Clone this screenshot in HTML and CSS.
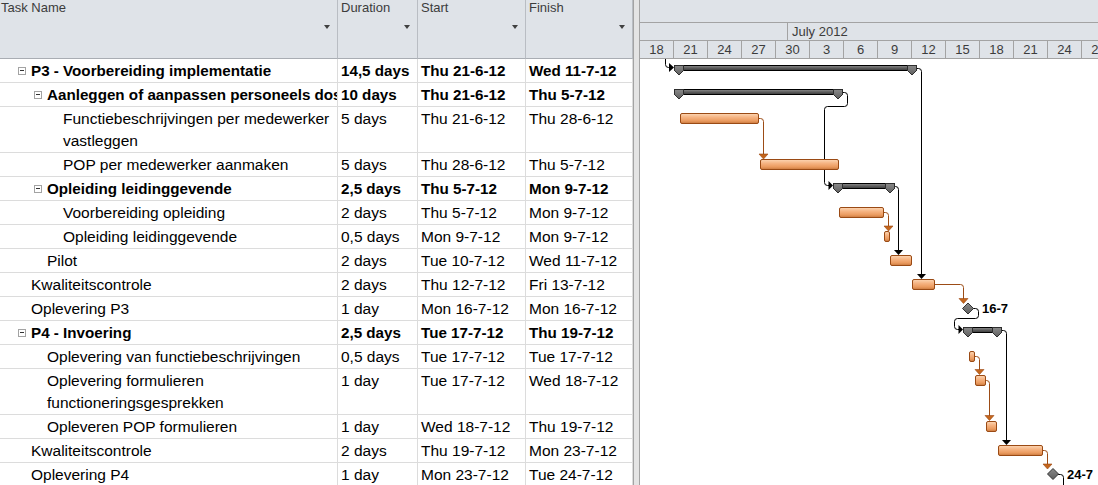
FILE: index.html
```html
<!DOCTYPE html>
<html>
<head>
<meta charset="utf-8">
<link rel="stylesheet" href="styles.css">
</head>
<body>
<div class="app">
  <div class="table">
    <div class="hrow">
      <div class="th name"><span>Task Name</span><i class="dd"></i></div>
      <div class="th"><span>Duration</span><i class="dd"></i></div>
      <div class="th"><span>Start</span><i class="dd"></i></div>
      <div class="th"><span>Finish</span><i class="dd"></i></div>
    </div>
    <div class="row b"><div class="td name l1"><i class="tg"></i>P3 - Voorbereiding implementatie</div><div class="td">14,5 days</div><div class="td">Thu 21-6-12</div><div class="td">Wed 11-7-12</div></div>
    <div class="row b"><div class="td name l2"><i class="tg"></i>Aanleggen of aanpassen personeels dossier</div><div class="td">10 days</div><div class="td">Thu 21-6-12</div><div class="td">Thu 5-7-12</div></div>
    <div class="row"><div class="td name l3">Functiebeschrijvingen per medewerker<br>vastleggen</div><div class="td">5 days</div><div class="td">Thu 21-6-12</div><div class="td">Thu 28-6-12</div></div>
    <div class="row"><div class="td name l3">POP per medewerker aanmaken</div><div class="td">5 days</div><div class="td">Thu 28-6-12</div><div class="td">Thu 5-7-12</div></div>
    <div class="row b"><div class="td name l2"><i class="tg"></i>Opleiding leidinggevende</div><div class="td">2,5 days</div><div class="td">Thu 5-7-12</div><div class="td">Mon 9-7-12</div></div>
    <div class="row"><div class="td name l3">Voorbereiding opleiding</div><div class="td">2 days</div><div class="td">Thu 5-7-12</div><div class="td">Mon 9-7-12</div></div>
    <div class="row"><div class="td name l3">Opleiding leidinggevende</div><div class="td">0,5 days</div><div class="td">Mon 9-7-12</div><div class="td">Mon 9-7-12</div></div>
    <div class="row"><div class="td name l2">Pilot</div><div class="td">2 days</div><div class="td">Tue 10-7-12</div><div class="td">Wed 11-7-12</div></div>
    <div class="row"><div class="td name l1">Kwaliteitscontrole</div><div class="td">2 days</div><div class="td">Thu 12-7-12</div><div class="td">Fri 13-7-12</div></div>
    <div class="row"><div class="td name l1">Oplevering P3</div><div class="td">1 day</div><div class="td">Mon 16-7-12</div><div class="td">Mon 16-7-12</div></div>
    <div class="row b"><div class="td name l1"><i class="tg"></i>P4 - Invoering</div><div class="td">2,5 days</div><div class="td">Tue 17-7-12</div><div class="td">Thu 19-7-12</div></div>
    <div class="row"><div class="td name l2">Oplevering van functiebeschrijvingen</div><div class="td">0,5 days</div><div class="td">Tue 17-7-12</div><div class="td">Tue 17-7-12</div></div>
    <div class="row"><div class="td name l2">Oplevering formulieren<br>functioneringsgesprekken</div><div class="td">1 day</div><div class="td">Tue 17-7-12</div><div class="td">Wed 18-7-12</div></div>
    <div class="row"><div class="td name l2">Opleveren POP formulieren</div><div class="td">1 day</div><div class="td">Wed 18-7-12</div><div class="td">Thu 19-7-12</div></div>
    <div class="row"><div class="td name l1">Kwaliteitscontrole</div><div class="td">2 days</div><div class="td">Thu 19-7-12</div><div class="td">Mon 23-7-12</div></div>
    <div class="row"><div class="td name l1">Oplevering P4</div><div class="td">1 day</div><div class="td">Mon 23-7-12</div><div class="td">Tue 24-7-12</div></div>
  </div>
  <div class="split"></div>
  <div class="gantt">
    <div class="t1"></div>
    <div class="t2"><div class="m jun"></div><div class="m jul">July 2012</div></div>
    <div class="t3">
      <div class="d">18</div><div class="d">21</div><div class="d">24</div><div class="d">27</div><div class="d">30</div><div class="d">3</div><div class="d">6</div><div class="d">9</div><div class="d">12</div><div class="d">15</div><div class="d">18</div><div class="d">21</div><div class="d">24</div><div class="d">27</div>
    </div>
    <svg class="chart" width="458" height="426" viewBox="640 59 458 426" xmlns="http://www.w3.org/2000/svg">
      <defs>
        <linearGradient id="tb" x1="0" y1="0" x2="0" y2="1">
          <stop offset="0" stop-color="#fcd6b4"/>
          <stop offset="0.4" stop-color="#f5b280"/>
          <stop offset="0.75" stop-color="#ea9a5e"/>
          <stop offset="1" stop-color="#c7783e"/>
        </linearGradient>
        <linearGradient id="sb" x1="0" y1="0" x2="0" y2="1">
          <stop offset="0" stop-color="#8e8e8e"/>
          <stop offset="0.5" stop-color="#5e5e5e"/>
          <stop offset="1" stop-color="#3a3a3a"/>
        </linearGradient>
        <linearGradient id="tr" x1="0" y1="0" x2="0" y2="1">
          <stop offset="0" stop-color="#8a8a8a"/>
          <stop offset="1" stop-color="#5e5e5e"/>
        </linearGradient>
      </defs>

      <g fill="none" stroke="#000" stroke-width="1">
        <path d="M665.5,59 V64.5 Q665.5,67.5 668.5,67.5 H670"/>
        <path d="M917,68.5 H918.5 Q921.5,68.5 921.5,71.5 V275"/>
        <path d="M843,92.5 H844.5 Q847.5,92.5 847.5,95.5 V103.5 Q847.5,106.5 844.5,106.5 H827.5 Q824.5,106.5 824.5,109.5 V182.5 Q824.5,185.5 827.5,185.5 H829"/>
        <path d="M895,186.5 H895.5 Q898.5,186.5 898.5,189.5 V251"/>
        <path d="M973,308.5 H975.5 Q978.5,308.5 978.5,311.5 V315.5 Q978.5,318.5 975.5,318.5 H957.5 Q954.5,318.5 954.5,321.5 V326.5 Q954.5,329.5 957.5,329.5 H959"/>
        <path d="M1002,330.5 H1003.5 Q1006.5,330.5 1006.5,333.5 V441"/>
        <path d="M1058,474.5 H1060.5 Q1063.5,474.5 1063.5,477.5 V486"/>
      </g>
      <g fill="#000">
        <polygon points="669,63 674,67.5 669,72"/>
        <polygon points="917,274 926,274 921.5,279"/>
        <polygon points="828.5,181 833,185.5 828.5,190"/>
        <polygon points="894,250 903,250 898.5,255"/>
        <polygon points="958.5,325 963,329.5 958.5,334"/>
        <polygon points="1002,440 1011,440 1006.5,445"/>
      </g>

      <g fill="none" stroke="#9c4c16" stroke-width="1">
        <path d="M759,118.5 H760.5 Q763.5,118.5 763.5,121.5 V155"/>
        <path d="M884,212.5 H885.5 Q888.5,212.5 888.5,215.5 V227"/>
        <path d="M935,284.5 H960.5 Q963.5,284.5 963.5,287.5 V299"/>
        <path d="M975,356.5 H976.5 Q979.5,356.5 979.5,359.5 V370"/>
        <path d="M986,380.5 H986.5 Q989.5,380.5 989.5,383.5 V416"/>
        <path d="M1043,450.5 H1044.5 Q1047.5,450.5 1047.5,453.5 V465"/>
      </g>
      <g fill="#c4661c" stroke="#9a4712" stroke-width="0.6">
        <polygon points="759,154 768,154 763.5,159"/>
        <polygon points="884,226 893,226 888.5,231"/>
        <polygon points="959,298.5 968,298.5 963.5,303.5"/>
        <polygon points="975,369.5 984,369.5 979.5,374.5"/>
        <polygon points="985,415.5 994,415.5 989.5,420.5"/>
        <polygon points="1043,464 1052,464 1047.5,469"/>
      </g>

      <g fill="url(#tb)" stroke="#9a4a14" stroke-width="1">
        <rect x="680.5" y="113.5" width="78" height="10" rx="1.5"/>
        <rect x="760.5" y="159.5" width="78" height="10" rx="1.5"/>
        <rect x="839.5" y="207.5" width="44" height="10" rx="1.5"/>
        <rect x="884.5" y="231.5" width="5" height="10" rx="1.5"/>
        <rect x="890.5" y="255.5" width="21" height="10" rx="1.5"/>
        <rect x="912.5" y="279.5" width="22" height="10" rx="1.5"/>
        <rect x="969.5" y="351.5" width="5" height="10" rx="1.5"/>
        <rect x="975.5" y="375.5" width="10" height="10" rx="1.5"/>
        <rect x="986.5" y="421.5" width="10" height="10" rx="1.5"/>
        <rect x="998.5" y="445.5" width="44" height="10" rx="1.5"/>
      </g>

      <g stroke="#000" stroke-width="1">
        <rect x="674.5" y="65.5" width="242" height="5" fill="url(#sb)"/>
        <rect x="674.5" y="89.5" width="168" height="5" fill="url(#sb)"/>
        <rect x="833.5" y="183.5" width="61" height="5" fill="url(#sb)"/>
        <rect x="963.5" y="327.5" width="38" height="5" fill="url(#sb)"/>
      </g>
      <g fill="url(#tr)" stroke="#2e2e2e" stroke-width="1" stroke-linejoin="miter">
        <polygon points="674.5,65.5 683.5,65.5 683.5,70.5 679,75 674.5,70.5"/>
        <polygon points="907.5,65.5 916.5,65.5 916.5,70.5 912,75 907.5,70.5"/>
        <polygon points="674.5,89.5 683.5,89.5 683.5,94.5 679,99 674.5,94.5"/>
        <polygon points="833.5,89.5 842.5,89.5 842.5,94.5 838,99 833.5,94.5"/>
        <polygon points="833.5,183.5 842.5,183.5 842.5,188.5 838,193 833.5,188.5"/>
        <polygon points="885.5,183.5 894.5,183.5 894.5,188.5 890,193 885.5,188.5"/>
        <polygon points="963.5,327.5 972.5,327.5 972.5,332.5 968,337 963.5,332.5"/>
        <polygon points="992.5,327.5 1001.5,327.5 1001.5,332.5 997,337 992.5,332.5"/>
      </g>

      <g fill="url(#tr)" stroke="#333" stroke-width="1">
        <polygon points="968,303 973.5,308.5 968,314 962.5,308.5"/>
        <polygon points="1053,468.5 1058.5,474 1053,479.5 1047.5,474"/>
      </g>
      <text class="ml" x="982" y="313">16-7</text>
      <text class="ml" x="1067" y="479">24-7</text>
    </svg>
  </div>
</div>
</body>
</html>
```

FILE: styles.css
```css
* { box-sizing: border-box; }

html, body {
  margin: 0;
  padding: 0;
}

body {
  width: 1098px;
  height: 485px;
  overflow: hidden;
  background: #fff;
  font-family: "Liberation Sans", Arial, sans-serif;
  color: #000;
}

.app {
  display: flex;
  height: 485px;
  overflow: hidden;
}

.table {
  width: 633px;
  flex: none;
}

.hrow,
.row {
  display: grid;
  grid-template-columns: 338px 80px 108px 107px;
}

.th {
  height: 59px;
  background: #dfe3e8;
  border-right: 1px solid #b9bdc3;
  border-bottom: 1px solid #a9adb3;
  display: flex;
  flex-direction: column;
  padding-left: 3px;
  font-size: 13px;
  line-height: 15px;
  color: #3c3c3c;
}

.th.name { padding-left: 1px; }

.dd {
  align-self: flex-end;
  margin: 10px 7px 0 0;
  width: 0;
  height: 0;
  border-left: 3.5px solid transparent;
  border-right: 3.5px solid transparent;
  border-top: 4px solid #404040;
}

.row {
  border-bottom: 1px solid #dcdcdc;
}

.td {
  border-right: 1px solid #dcdcdc;
  padding: 1px 0 0 3px;
  font-size: 15.5px;
  line-height: 22px;
  white-space: nowrap;
  overflow: hidden;
}

.row.b .td {
  font-weight: bold;
  font-size: 15.2px;
}

.td.l1 { padding-left: 31px; }
.td.l2 { padding-left: 47px; }
.td.l3 { padding-left: 63px; }

.tg {
  display: inline-block;
  vertical-align: top;
  position: relative;
  width: 8px;
  height: 8px;
  margin: 7px 5px 0 -13px;
  border: 1px solid #a3a3a3;
  background: #fff;
}

.tg::after {
  content: "";
  position: absolute;
  left: 1px;
  top: 2px;
  width: 4px;
  height: 1px;
  background: #333;
}

.split {
  width: 6px;
  flex: none;
  background: #e4e4e4;
  border-left: 1px solid #a3a3a3;
}

.gantt {
  width: 459px;
  flex: none;
  border-left: 1px solid #a3a3a3;
  overflow: hidden;
}

.t1 {
  height: 23px;
  background: #dfe3e8;
  border-bottom: 1px solid #a3a3a3;
}

.t2,
.t3 {
  display: flex;
  height: 18px;
  background: #dfe3e8;
  border-bottom: 1px solid #a3a3a3;
  font-size: 13px;
  line-height: 17px;
  color: #3c3c3c;
  white-space: nowrap;
  overflow: hidden;
}

.t2 .jun {
  width: 148px;
  flex: none;
  border-right: 1px solid #a3a3a3;
}

.t2 .jul {
  flex: 1;
  padding-left: 4px;
}

.t3 .d {
  width: 34px;
  flex: none;
  text-align: center;
  border-right: 1px solid #a3a3a3;
}

.chart {
  display: block;
}

.ml {
  font-family: "Liberation Sans", Arial, sans-serif;
  font-weight: bold;
  font-size: 13px;
  fill: #000;
}
```
